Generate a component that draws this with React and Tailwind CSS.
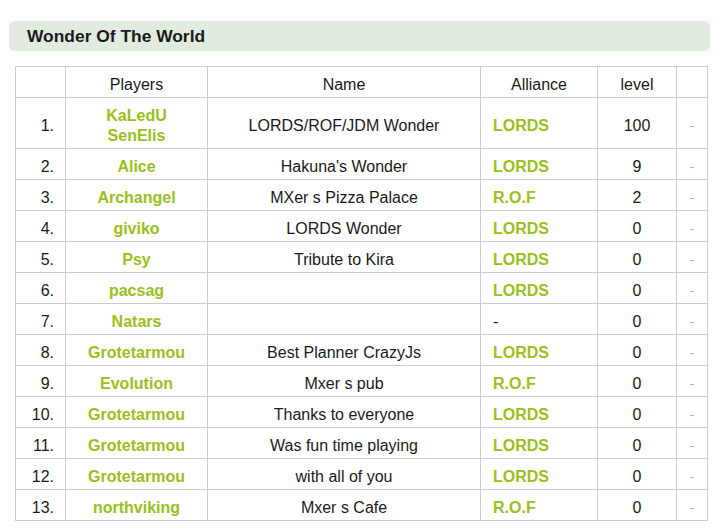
import React from "react";

const rows = [
  { n: "1.", p: ["KaLedU", "SenElis"], name: "LORDS/ROF/JDM Wonder", a: "LORDS", l: "100" },
  { n: "2.", p: ["Alice"], name: "Hakuna's Wonder", a: "LORDS", l: "9" },
  { n: "3.", p: ["Archangel"], name: "MXer s Pizza Palace", a: "R.O.F", l: "2" },
  { n: "4.", p: ["giviko"], name: "LORDS Wonder", a: "LORDS", l: "0" },
  { n: "5.", p: ["Psy"], name: "Tribute to Kira", a: "LORDS", l: "0" },
  { n: "6.", p: ["pacsag"], name: "", a: "LORDS", l: "0" },
  { n: "7.", p: ["Natars"], name: "", a: "-", l: "0" },
  { n: "8.", p: ["Grotetarmou"], name: "Best Planner CrazyJs", a: "LORDS", l: "0" },
  { n: "9.", p: ["Evolution"], name: "Mxer s pub", a: "R.O.F", l: "0" },
  { n: "10.", p: ["Grotetarmou"], name: "Thanks to everyone", a: "LORDS", l: "0" },
  { n: "11.", p: ["Grotetarmou"], name: "Was fun time playing", a: "LORDS", l: "0" },
  { n: "12.", p: ["Grotetarmou"], name: "with all of you", a: "LORDS", l: "0" },
  { n: "13.", p: ["northviking"], name: "Mxer s Cafe", a: "R.O.F", l: "0" },
];

const cell = "border border-[#cccccc] pt-[6px] pb-0 px-0";

export default function App() {
  return (
    <div
      className="w-[720px] h-[531px] bg-white pl-[9px] pt-[21px]"
      style={{ fontFamily: '"Liberation Sans", Arial, sans-serif' }}
    >
      <div className="w-[701px] h-[30px] rounded-[6px] bg-[#e1ebdf] flex items-center pl-[18px] pt-[2px]">
        <h1 className="text-[17.4px] font-bold text-[#1a1a1a] leading-none">Wonder Of The World</h1>
      </div>
      <table className="mt-[15px] ml-[6px] w-[692px] table-fixed border-collapse text-[16px] text-[#1a1a1a] leading-[20px]">
        <colgroup>
          <col className="w-[50px]" />
          <col className="w-[142px]" />
          <col className="w-[273px]" />
          <col className="w-[117px]" />
          <col className="w-[79px]" />
          <col className="w-[31px]" />
        </colgroup>
        <thead>
          <tr className="h-[31px]">
            <th className={cell + " font-normal"}></th>
            <th className={cell + " font-normal text-center"}>Players</th>
            <th className={cell + " font-normal text-center"}>Name</th>
            <th className={cell + " font-normal text-center"}>Alliance</th>
            <th className={cell + " font-normal text-center"}>level</th>
            <th className={cell + " font-normal"}></th>
          </tr>
        </thead>
        <tbody>
          {rows.map((r) => (
            <tr key={r.n} className={r.p.length > 1 ? "h-[51px]" : "h-[31px]"}>
              <td className={cell + " text-right pr-[11px]"}>{r.n}</td>
              <td className={cell + " text-center font-bold text-[#99c01a]"}>
                {r.p.map((x) => (
                  <div key={x}>{x}</div>
                ))}
              </td>
              <td className={cell + " text-center"}>{r.name}</td>
              <td
                className={
                  cell + " text-left pl-[12px] " + (r.a === "-" ? "" : "font-bold text-[#99c01a]")
                }
              >
                {r.a}
              </td>
              <td className={cell + " text-center"}>{r.l}</td>
              <td className={cell + " text-center text-[13px] text-[#aaaaaa]"}>-</td>
            </tr>
          ))}
        </tbody>
      </table>
    </div>
  );
}
